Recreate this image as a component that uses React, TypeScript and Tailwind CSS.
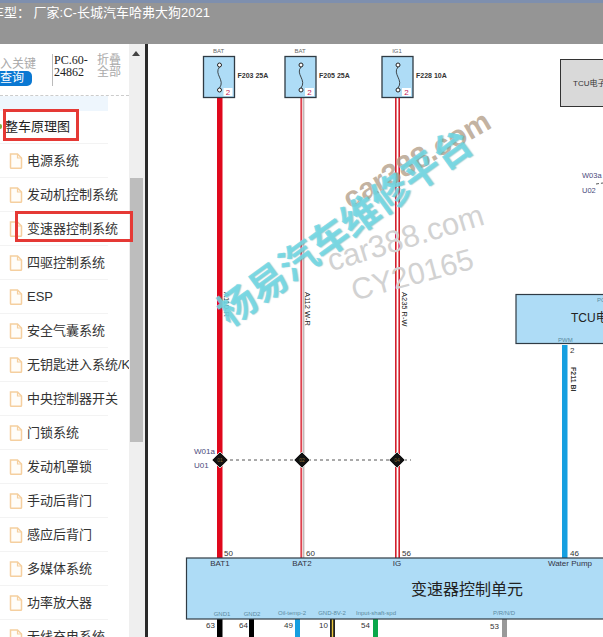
import { FC } from 'react';

const systems = [
  '电源系统',
  '发动机控制系统',
  '变速器控制系统',
  '四驱控制系统',
  'ESP',
  '安全气囊系统',
  '无钥匙进入系统/K',
  '中央控制器开关',
  '门锁系统',
  '发动机罩锁',
  '手动后背门',
  '感应后背门',
  '多媒体系统',
  '功率放大器',
  '无线充电系统',
];

const cjk = '"Liberation Sans", "Noto Sans CJK SC", sans-serif';

const FileIcon = () => (
  <svg width="14" height="16" viewBox="0 0 14 16" className="shrink-0">
    <path d="M1.5 1h7l4 4v9.5a.8.8 0 0 1-.8.8H2.3a.8.8 0 0 1-.8-.8z" fill="#fffdf9" stroke="#f5cf9f" strokeWidth="1.5" />
    <path d="M8.5 1v4h4" fill="none" stroke="#f5cf9f" strokeWidth="1.2" />
  </svg>
);

const Fuse: FC<{ x: number; top: string; label: string }> = ({ x, top, label }) => (
  <g>
    <text x={x + 15} y="53" textAnchor="middle" fontSize="6" fill="#666">{top}</text>
    <rect x={x} y="56.5" width="31" height="41" fill="#aedcf6" stroke="#2f3b44" strokeWidth="1.3" />
    <circle cx={x + 16} cy="65" r="2" fill="#fff" stroke="#222" strokeWidth="1" />
    <circle cx={x + 16} cy="90" r="2" fill="#fff" stroke="#222" strokeWidth="1" />
    <path d={`M${x + 16} 67 C${x + 10} 74 ${x + 22} 80 ${x + 16} 88`} fill="none" stroke="#222" strokeWidth="0.8" />
    <rect x={x + 20} y="88" width="9" height="8" fill="#fff" />
    <text x={x + 24.5} y="95" textAnchor="middle" fontSize="8" fill="#c2185b">2</text>
    <text x={x + 34} y="78" fontSize="7" fontWeight="700" fill="#333">{label}</text>
  </g>
);

const Junction: FC<{ x: number; label: string }> = ({ x, label }) => (
  <g>
    <path d={`M${x} 452 L${x + 8} 460 L${x} 468 L${x - 8} 460 Z`} fill="#111" stroke="#ccc" strokeWidth="1" />
    <text x={x} y="462" textAnchor="middle" fontSize="5" fill="#8a6d3b">{label}</text>
  </g>
);

const Diagram = () => (
  <svg width="455" height="593" viewBox="148 44 455 593" className="block" style={{ fontFamily: cjk }}>
    {/* wires */}
    <rect x="217" y="98" width="5.5" height="460" fill="#e0081c" />
    <rect x="300.5" y="98" width="4" height="460" fill="#f3d0d0" />
    <rect x="300.5" y="98" width="1.3" height="460" fill="#d92030" />
    <rect x="303" y="98" width="1.2" height="460" fill="#bbb" />
    <rect x="395" y="98" width="5" height="460" fill="#fff" />
    <rect x="395" y="98" width="1.6" height="460" fill="#d3202c" />
    <rect x="398.4" y="98" width="1.6" height="460" fill="#d3202c" />
    <rect x="562" y="345" width="5.5" height="213" fill="#159fe0" />
    <rect x="217" y="619" width="5.5" height="18" fill="#000" />
    <rect x="249" y="619" width="5" height="18" fill="#000" />
    <rect x="295" y="619" width="5" height="18" fill="#159fe0" />
    <rect x="330" y="619" width="5" height="18" fill="#222" />
    <rect x="331.8" y="619" width="1.4" height="18" fill="#e9c53a" />
    <rect x="373" y="619" width="5" height="18" fill="#0aa84a" />
    <rect x="502" y="619" width="5" height="18" fill="#999" />

    <Fuse x={203.5} top="BAT" label="F203 25A" />
    <Fuse x={285} top="BAT" label="F205 25A" />
    <Fuse x={382} top="IG1" label="F228 10A" />

    {/* wire codes */}
    <text transform="translate(224 292) rotate(90)" fontSize="7.5" fill="#222">A110-R</text>
    <text transform="translate(305 292) rotate(90)" fontSize="7.5" fill="#222">A112 W-R</text>
    <text transform="translate(402 292) rotate(90)" fontSize="7.5" fill="#222">A235 R-W</text>
    <text transform="translate(571 367) rotate(90)" fontSize="7" fontWeight="700" fill="#333">F211 Bl</text>

    {/* splice line */}
    <line x1="212" y1="460" x2="411" y2="460" stroke="#555" strokeWidth="1" strokeDasharray="3 3" />
    <Junction x={220} label="01" />
    <Junction x={302} label="02" />
    <Junction x={397} label="04" />
    <text x="194" y="454" fontSize="8" fill="#4a4a7c">W01a</text>
    <text x="194" y="468" fontSize="8" fill="#4a4a7c">U01</text>
    <text x="582" y="178" fontSize="7.5" fill="#4a4a7c">W03a</text>
    <text x="582" y="193" fontSize="7.5" fill="#4a4a7c">U02</text>
    <line x1="596" y1="184" x2="603" y2="183" stroke="#555" strokeWidth="1" strokeDasharray="3 2" />

    {/* TCU fuse box */}
    <rect x="560.5" y="59.5" width="60" height="47" fill="#d9d9d9" stroke="#333" strokeWidth="1" />
    <text x="573" y="86" fontSize="8" fill="#333">TCU电子</text>

    {/* TCU unit */}
    <rect x="516" y="294.5" width="100" height="49" fill="#aedcf6" stroke="#2f3b44" strokeWidth="1.2" />
    <text x="597" y="302" fontSize="6" fill="#5a8aa0">PC</text>
    <text x="571" y="322" fontSize="12" fill="#222">TCU电</text>
    <text x="558" y="342" fontSize="6" fill="#5a8aa0">PWM</text>
    <text x="570" y="353" fontSize="8" fill="#333">2</text>

    {/* control unit */}
    <rect x="186.5" y="558" width="430" height="61" fill="#aedcf6" stroke="#2f3b44" strokeWidth="1.2" />
    <text x="224" y="556" fontSize="8" fill="#333">50</text>
    <text x="306" y="556" fontSize="8" fill="#333">60</text>
    <text x="402" y="556" fontSize="8" fill="#333">56</text>
    <text x="570" y="556" fontSize="8" fill="#333">46</text>
    <text x="220" y="566" textAnchor="middle" fontSize="8" fill="#334">BAT1</text>
    <text x="302" y="566" textAnchor="middle" fontSize="8" fill="#334">BAT2</text>
    <text x="397" y="566" textAnchor="middle" fontSize="8" fill="#334">IG</text>
    <text x="570" y="566" textAnchor="middle" fontSize="8" fill="#334">Water Pump</text>
    <text x="411" y="595" fontSize="16" fill="#222">变速器控制单元</text>
    <text x="222" y="616" textAnchor="middle" fontSize="6" fill="#5a8aa0">GND1</text>
    <text x="252" y="616" textAnchor="middle" fontSize="6" fill="#5a8aa0">GND2</text>
    <text x="292" y="615" textAnchor="middle" fontSize="6" fill="#5a8aa0">Oil-temp-2</text>
    <text x="332" y="615" textAnchor="middle" fontSize="6" fill="#5a8aa0">GND-8V-2</text>
    <text x="376" y="615" textAnchor="middle" fontSize="6" fill="#5a8aa0">Input-shaft-spd</text>
    <text x="504" y="615" textAnchor="middle" fontSize="6" fill="#5a8aa0">P/R/N/D</text>
    <text x="206" y="628" fontSize="8" fill="#333">63</text>
    <text x="239" y="628" fontSize="8" fill="#333">64</text>
    <text x="284" y="628" fontSize="8" fill="#333">49</text>
    <text x="319" y="628" fontSize="8" fill="#333">10</text>
    <text x="361" y="628" fontSize="8" fill="#333">54</text>
    <text x="490" y="629" fontSize="8" fill="#333">53</text>
  </svg>
);

const Watermark = () => (
  <>
    <span className="pointer-events-none absolute left-[328px] top-[246px] origin-left -rotate-[17deg] whitespace-nowrap text-[31px] leading-none text-[#d2d2d2]">
      car388.com
    </span>
    <span className="pointer-events-none absolute left-[352px] top-[276px] origin-left -rotate-[15deg] whitespace-nowrap text-[30px] leading-none text-[#d2d2d2]">
      CY20165
    </span>
    <span className="pointer-events-none absolute left-[345px] top-[186px] origin-left -rotate-[30deg] whitespace-nowrap text-[30px] font-bold leading-none text-[#b09a84]/75">
      car388.com
    </span>
    <span className="pointer-events-none absolute left-[222px] top-[298px] origin-left -rotate-[36deg] whitespace-nowrap text-[38px] font-bold leading-none text-[#72d8e4]/85 [text-shadow:1px_1px_1px_#4aa3b080]">
      杨易汽车维修平台
    </span>
  </>
);

export default function App() {
  return (
    <div className="relative flex h-[637px] w-[603px] flex-col overflow-hidden bg-white" style={{ fontFamily: cjk }}>
      <header className="-ml-[9px] h-[44px] shrink-0 border-t-[3px] border-[#7e8fae] bg-[#959595] pl-0 pt-[2px] text-[13px] leading-[16px] whitespace-nowrap text-white">
        车型：&nbsp;厂家:C-长城汽车哈弗大狗2021
      </header>

      <div className="flex min-h-0 flex-1">
        {/* sidebar */}
        <aside className="flex w-[148px] shrink-0 border-r-[3px] border-[#2a2a2a]">
          <div className="w-[129px] shrink-0 overflow-hidden">
            <div className="flex h-[52px] border-b border-dashed border-[#ccc] pt-[10px]">
              <div className="flex w-[52px] flex-col items-start pt-[4px] whitespace-nowrap">
                <span className="text-[12px] leading-[13px] text-[#aaa]">入关键</span>
                <span className="w-[32px] rounded-r-[5px] bg-[#0a78d2] text-[12px] leading-[15px] text-white">查询</span>
              </div>
              <div className="h-[32px] w-[45px] border-l border-[#bbb] pl-px font-['Liberation_Serif'] text-[12px] leading-[12px] text-[#222]">
                PC.60-
                <br />
                24862
              </div>
              <div className="text-[12px] leading-[12px] text-[#aaa]">
                折叠
                <br />
                全部
              </div>
            </div>
            <div className="h-[15px] w-[108px] bg-[#eef6fd]" />
            <div className="flex h-[33px] w-[108px] items-center gap-[3px] border-b border-[#f3f3f3] pb-px text-[13px] text-[#222]">
              <span className="h-[5px] w-[2px] rounded-r bg-[#7fb24a]" />
              整车原理图
            </div>
            {systems.map((name) => (
              <div key={name} className="flex h-[34px] w-[108px] items-center gap-[4px] border-b border-[#f3f3f3] pl-[9px] pt-px text-[13px] whitespace-nowrap text-[#333]">
                <FileIcon />
                <span>{name}</span>
              </div>
            ))}
          </div>
          <div className="flex w-[16px] shrink-0 flex-col items-start bg-[#efefef] pt-[7px] pl-px">
            <span className="ml-[2px] h-0 w-0 border-x-[4px] border-b-[5px] border-x-transparent border-b-[#444]" />
            <div className="mt-[122px] h-[264px] w-[13px] bg-[#bdbdbd]" />
          </div>
        </aside>

        <main className="min-w-0 flex-1">
          <Diagram />
        </main>
      </div>

      <Watermark />

      {/* annotation boxes */}
      <span className="absolute left-[3px] top-[109px] h-[32px] w-[76px] border-[3px] border-[#e53935]" />
      <span className="absolute left-[15px] top-[211px] h-[31px] w-[118px] border-[3px] border-[#e53935]" />
    </div>
  );
}
